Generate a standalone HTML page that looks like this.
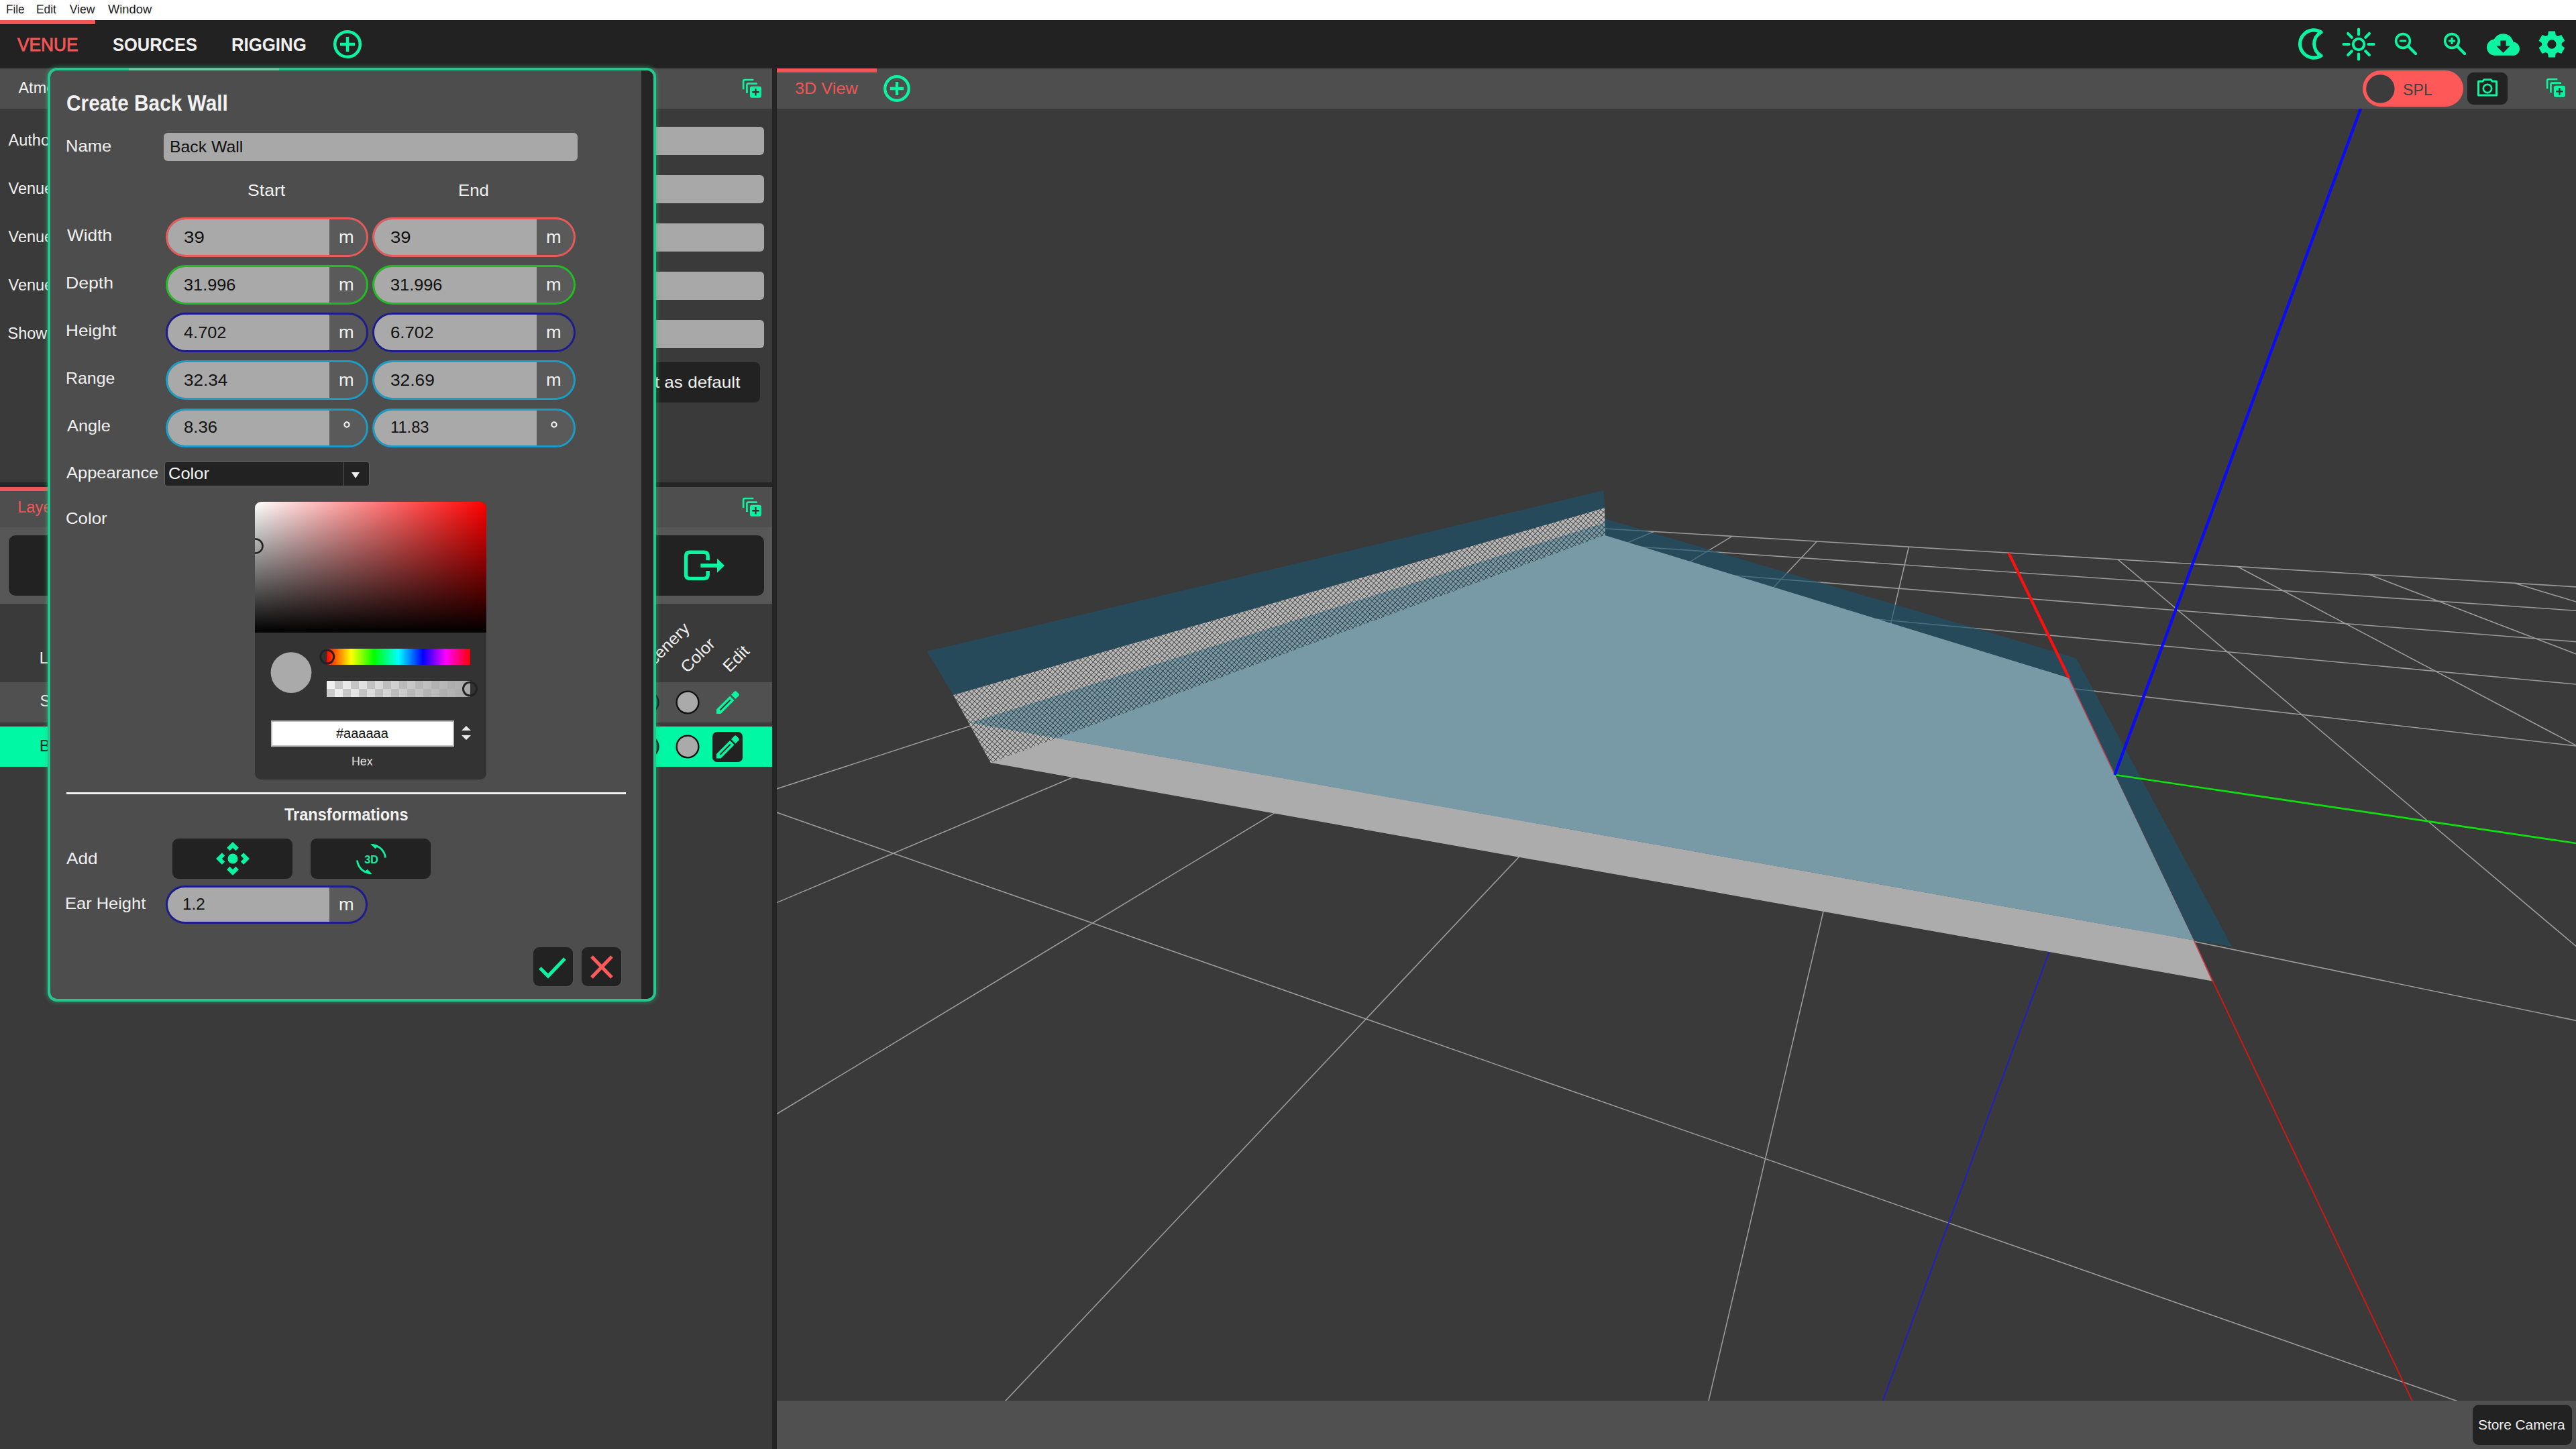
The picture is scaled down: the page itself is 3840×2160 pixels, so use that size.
<!DOCTYPE html><html><head><meta charset="utf-8"><style>
html,body{margin:0;padding:0;width:3840px;height:2160px;overflow:hidden;background:#3a3a3a;font-family:"Liberation Sans",sans-serif;}
.r{position:absolute;box-sizing:border-box;}
.t{position:absolute;white-space:nowrap;transform-origin:0 0;}
</style></head><body>
<div class="r" style="left:0px;top:0px;width:3840.00px;height:30.00px;background:#ffffff;"></div>
<div class="t" style="left:8.60px;top:5.89px;font-size:17.5px;line-height:17.5px;color:#1a1a1a;transform:scaleX(0.9735);">File</div>
<div class="t" style="left:53.98px;top:5.89px;font-size:17.5px;line-height:17.5px;color:#1a1a1a;transform:scaleX(0.9897);">Edit</div>
<div class="t" style="left:103.73px;top:5.89px;font-size:17.5px;line-height:17.5px;color:#1a1a1a;">View</div>
<div class="t" style="left:160.83px;top:5.89px;font-size:17.5px;line-height:17.5px;color:#1a1a1a;transform:scaleX(1.0464);">Window</div>
<div class="r" style="left:0px;top:30px;width:3840.00px;height:72.00px;background:#222222;"></div>
<div class="r" style="left:0px;top:30px;width:142.00px;height:6.00px;background:#f25555;"></div>
<div class="t" style="left:25.70px;top:52.47px;font-size:28.5px;line-height:28.5px;color:#f25555;transform:scaleX(0.9208);-webkit-text-stroke:0.9px #f25555;">VENUE</div>
<div class="t" style="left:167.79px;top:52.47px;font-size:28.5px;line-height:28.5px;color:#f0f0f0;font-weight:700;transform:scaleX(0.8941);">SOURCES</div>
<div class="t" style="left:345.10px;top:52.47px;font-size:28.5px;line-height:28.5px;color:#f0f0f0;font-weight:700;transform:scaleX(0.9043);">RIGGING</div>
<svg class="r" style="left:490px;top:38px;" width="56" height="56"><circle cx="28" cy="28" r="18.8" fill="none" stroke="#0cf4a2" stroke-width="4.5"/><path d="M17 28H39M28 17V39" stroke="#0cf4a2" stroke-width="4.5"/></svg>
<svg class="r" style="left:3420px;top:38px;" width="50" height="56"><path d="M40 10 A20.6 20.6 0 1 0 40 45 A20 20 0 0 1 40 10 Z" fill="none" stroke="#0cf4a2" stroke-width="5.2" stroke-linejoin="round"/></svg>
<svg class="r" style="left:3488px;top:38px;" width="56" height="56"><circle cx="28" cy="28" r="8.2" fill="none" stroke="#0cf4a2" stroke-width="4"/><line x1="28.00" y1="13.50" x2="28.00" y2="5.50" stroke="#0cf4a2" stroke-width="4.2" stroke-linecap="round"/><line x1="38.25" y1="17.75" x2="43.91" y2="12.09" stroke="#0cf4a2" stroke-width="4.2" stroke-linecap="round"/><line x1="42.50" y1="28.00" x2="50.50" y2="28.00" stroke="#0cf4a2" stroke-width="4.2" stroke-linecap="round"/><line x1="38.25" y1="38.25" x2="43.91" y2="43.91" stroke="#0cf4a2" stroke-width="4.2" stroke-linecap="round"/><line x1="28.00" y1="42.50" x2="28.00" y2="50.50" stroke="#0cf4a2" stroke-width="4.2" stroke-linecap="round"/><line x1="17.75" y1="38.25" x2="12.09" y2="43.91" stroke="#0cf4a2" stroke-width="4.2" stroke-linecap="round"/><line x1="13.50" y1="28.00" x2="5.50" y2="28.00" stroke="#0cf4a2" stroke-width="4.2" stroke-linecap="round"/><line x1="17.75" y1="17.75" x2="12.09" y2="12.09" stroke="#0cf4a2" stroke-width="4.2" stroke-linecap="round"/></svg>
<svg class="r" style="left:3561.7px;top:40.6px;" width="48" height="48"><circle cx="20" cy="20" r="10.4" fill="none" stroke="#0cf4a2" stroke-width="3.6"/><line x1="28.5" y1="28.5" x2="39" y2="39" stroke="#0cf4a2" stroke-width="4.4" stroke-linecap="round"/><line x1="15" y1="20" x2="25" y2="20" stroke="#0cf4a2" stroke-width="3"/></svg>
<svg class="r" style="left:3635px;top:40.6px;" width="48" height="48"><circle cx="20" cy="20" r="10.4" fill="none" stroke="#0cf4a2" stroke-width="3.6"/><line x1="28.5" y1="28.5" x2="39" y2="39" stroke="#0cf4a2" stroke-width="4.4" stroke-linecap="round"/><line x1="15" y1="20" x2="25" y2="20" stroke="#0cf4a2" stroke-width="3"/><line x1="20" y1="15" x2="20" y2="25" stroke="#0cf4a2" stroke-width="3"/></svg>
<svg class="r" style="left:3707px;top:42px;" width="49" height="49" viewBox="0 0 24 24"><path fill="#0cf4a2" d="M19.35 10.04C18.67 6.59 15.64 4 12 4 9.11 4 6.6 5.64 5.35 8.04 2.34 8.36 0 10.91 0 14c0 3.31 2.69 6 6 6h13c2.76 0 5-2.24 5-5 0-2.64-2.05-4.78-4.65-4.96zM17 13l-5 5-5-5h3V9h4v4h3z"/></svg>
<svg class="r" style="left:3780px;top:42px;" width="48" height="48"><path fill="#0cf4a2" fill-rule="evenodd" d="M18.10 10.28 L18.85 4.54 L28.95 4.54 L29.70 10.28 L32.88 12.11 L38.22 9.90 L43.27 18.65 L38.69 22.16 L38.69 25.84 L43.27 29.35 L38.22 38.10 L32.88 35.89 L29.70 37.72 L28.95 43.46 L18.85 43.46 L18.10 37.72 L14.92 35.89 L9.58 38.10 L4.53 29.35 L9.11 25.84 L9.11 22.16 L4.53 18.65 L9.58 9.90 L14.92 12.11 Z M30.599999999999998 24 A6.7 6.7 0 1 0 17.2 24 A6.7 6.7 0 1 0 30.599999999999998 24 Z"/></svg>
<div class="r" style="left:0px;top:102px;width:1151.00px;height:2058.00px;background:#3a3a3a;"></div>
<div class="r" style="left:0px;top:102px;width:1151.00px;height:60.00px;background:#4e4e4e;"></div>
<div class="t" style="left:27.45px;top:119.91px;font-size:23.5px;line-height:23.5px;color:#f0f0f0;">Atmosphere</div>
<svg class="r" style="left:1106px;top:117px;" width="32" height="32"><path d="M2.1 16.3V4.2Q2.1 2 4.3 2H17.3" fill="none" stroke="#0cf4a2" stroke-width="2.7"/><path d="M7.4 22V9.8Q7.4 7.6 9.6 7.6H22.8" fill="none" stroke="#0cf4a2" stroke-width="2.7"/><rect x="11.9" y="11.7" width="17" height="17.1" rx="3" fill="#0cf4a2"/><path d="M15.2 20.2H25.7M20.4 15V25.4" stroke="#333" stroke-width="2.4"/></svg>
<div class="t" style="left:12.55px;top:198.11px;font-size:23.5px;line-height:23.5px;color:#f0f0f0;">Author</div>
<div class="r" style="left:300px;top:189px;width:839.00px;height:42.00px;background:#a8a8a8;border-radius:6px;"></div>
<div class="t" style="left:12.51px;top:270.11px;font-size:23.5px;line-height:23.5px;color:#f0f0f0;">Venue name</div>
<div class="r" style="left:300px;top:261px;width:839.00px;height:42.00px;background:#a8a8a8;border-radius:6px;"></div>
<div class="t" style="left:12.51px;top:342.11px;font-size:23.5px;line-height:23.5px;color:#f0f0f0;">Venue location</div>
<div class="r" style="left:300px;top:333px;width:839.00px;height:42.00px;background:#a8a8a8;border-radius:6px;"></div>
<div class="t" style="left:12.51px;top:414.11px;font-size:23.5px;line-height:23.5px;color:#f0f0f0;">Venue type</div>
<div class="r" style="left:300px;top:405px;width:839.00px;height:42.00px;background:#a8a8a8;border-radius:6px;"></div>
<div class="t" style="left:11.54px;top:486.11px;font-size:23.5px;line-height:23.5px;color:#f0f0f0;">Show name</div>
<div class="r" style="left:300px;top:477px;width:839.00px;height:42.00px;background:#a8a8a8;border-radius:6px;"></div>
<div class="r" style="left:300px;top:540px;width:833.00px;height:60.00px;background:#222222;border-radius:8px;"></div>
<div class="t" style="left:944.30px;top:558.38px;font-size:24px;line-height:24px;color:#f0f0f0;transform:scaleX(1.0860);">Set as default</div>
<div class="r" style="left:0px;top:719px;width:1151.00px;height:7.00px;background:#252525;"></div>
<div class="r" style="left:0px;top:726px;width:1151.00px;height:60.00px;background:#4e4e4e;"></div>
<div class="r" style="left:0px;top:726px;width:150.00px;height:6.00px;background:#f25555;"></div>
<div class="t" style="left:26.27px;top:744.71px;font-size:23.5px;line-height:23.5px;color:#f25555;">Layers</div>
<svg class="r" style="left:1106px;top:740.5px;" width="32" height="32"><path d="M2.1 16.3V4.2Q2.1 2 4.3 2H17.3" fill="none" stroke="#0cf4a2" stroke-width="2.7"/><path d="M7.4 22V9.8Q7.4 7.6 9.6 7.6H22.8" fill="none" stroke="#0cf4a2" stroke-width="2.7"/><rect x="11.9" y="11.7" width="17" height="17.1" rx="3" fill="#0cf4a2"/><path d="M15.2 20.2H25.7M20.4 15V25.4" stroke="#333" stroke-width="2.4"/></svg>
<div class="r" style="left:0px;top:786px;width:1151.00px;height:114.00px;background:#575757;"></div>
<div class="r" style="left:12.5px;top:798px;width:1126.50px;height:90.00px;background:#222222;border-radius:10px;"></div>
<svg class="r" style="left:1016px;top:815px;" width="70" height="56"><path d="M39.2 20.2V14Q39.2 8.3 33.5 8.3H12.2Q6.5 8.3 6.5 14V41.7Q6.5 47.4 12.2 47.4H33.5Q39.2 47.4 39.2 41.7V36" fill="none" stroke="#0cf4a2" stroke-width="5.4"/><path d="M28.4 28.1H54" stroke="#0cf4a2" stroke-width="5.8"/><path d="M53 17.4L64 28.1L53 38.8Z" fill="#0cf4a2"/></svg>
<div class="t" style="left:58.87px;top:970.11px;font-size:23.5px;line-height:23.5px;color:#f0f0f0;">Layer</div>
<div class="t" style="left:903px;top:984.26px;font-size:24.5px;line-height:24.5px;color:#f0f0f0;transform-origin:0 20.74px;transform:rotate(-45deg) scaleX(1.04);">Visible</div>
<div class="t" style="left:963.5px;top:984.26px;font-size:24.5px;line-height:24.5px;color:#f0f0f0;transform-origin:0 20.74px;transform:rotate(-45deg) scaleX(1.04);">Scenery</div>
<div class="t" style="left:1024.5px;top:984.26px;font-size:24.5px;line-height:24.5px;color:#f0f0f0;transform-origin:0 20.74px;transform:rotate(-45deg) scaleX(1.04);">Color</div>
<div class="t" style="left:1087.8px;top:983.26px;font-size:24.5px;line-height:24.5px;color:#f0f0f0;transform-origin:0 20.74px;transform:rotate(-45deg) scaleX(1.04);">Edit</div>
<div class="r" style="left:0px;top:1016.6px;width:1151.00px;height:60.10px;background:#505050;"></div>
<div class="t" style="left:59.44px;top:1033.91px;font-size:23.5px;line-height:23.5px;color:#f0f0f0;">Stage</div>
<div class="r" style="left:0px;top:1083px;width:1151.00px;height:60.00px;background:#00f7a4;"></div>
<div class="t" style="left:59.07px;top:1100.71px;font-size:23.5px;line-height:23.5px;color:#1b1b1b;">Back Wall</div>
<svg class="r" style="left:1006px;top:1027.7px;" width="38" height="38"><circle cx="19" cy="19" r="16.4" fill="#aaaaaa" stroke="#111" stroke-width="2.4"/></svg>
<svg class="r" style="left:1006px;top:1093.6px;" width="38" height="38"><circle cx="19" cy="19" r="16.4" fill="#aaaaaa" stroke="#111" stroke-width="2.4"/></svg>
<svg class="r" style="left:946px;top:1028px;" width="38" height="38"><circle cx="19" cy="19" r="16.4" fill="#2a6a55" stroke="#111" stroke-width="2.4"/></svg>
<svg class="r" style="left:946px;top:1094px;" width="38" height="38"><circle cx="19" cy="19" r="16.4" fill="#2a6a55" stroke="#111" stroke-width="2.4"/></svg>
<div class="r" style="left:1062.4px;top:1091.2px;width:44.40px;height:44.40px;background:#222222;border-radius:7px;"></div>
<svg class="r" style="left:1046px;top:1024px;" width="70" height="50"><g transform="translate(22 40) rotate(-45)"><path d="M0 0L4.6 -4.6H33V4.6H4.6Z" fill="#0cf4a2"/><path d="M7.5 0H29.5" stroke="#262626" stroke-width="1.9"/><path d="M35.6 -4.6H42.5Q44.6 -4.6 44.6 -2.5V2.5Q44.6 4.6 42.5 4.6H35.6Z" fill="#0cf4a2"/></g></svg>
<div style="position:absolute;left:0;top:66px">
<svg class="r" style="left:1046px;top:1024px;" width="70" height="50"><g transform="translate(22 40.40000000000009) rotate(-45)"><path d="M0 0L4.6 -4.6H33V4.6H4.6Z" fill="#0cf4a2"/><path d="M7.5 0H29.5" stroke="#262626" stroke-width="1.9"/><path d="M35.6 -4.6H42.5Q44.6 -4.6 44.6 -2.5V2.5Q44.6 4.6 42.5 4.6H35.6Z" fill="#0cf4a2"/></g></svg>
</div>
<div class="r" style="left:1151px;top:102px;width:7.00px;height:2058.00px;background:#242424;"></div>
<div class="r" style="left:1158px;top:102px;width:2682.00px;height:60.00px;background:#4e4e4e;"></div>
<div class="r" style="left:1158px;top:102px;width:149.00px;height:6.00px;background:#f25555;"></div>
<div class="t" style="left:1185.04px;top:120.08px;font-size:24px;line-height:24px;color:#f25555;transform:scaleX(1.0536);">3D View</div>
<svg class="r" style="left:1310px;top:105px;" width="54" height="54"><circle cx="27" cy="27" r="17.8" fill="none" stroke="#0cf4a2" stroke-width="4.3"/><path d="M17 27H37M27 17V37" stroke="#0cf4a2" stroke-width="4.3"/></svg>
<div class="r" style="left:3522px;top:105px;width:149.50px;height:54.00px;background:#ff5858;border-radius:27px;"></div>
<svg class="r" style="left:3527px;top:110.5px;" width="44" height="44"><circle cx="21.4" cy="21.4" r="21.2" fill="#3c3c3c"/></svg>
<div class="t" style="left:3581.96px;top:122.18px;font-size:24px;line-height:24px;color:#404040;transform:scaleX(0.9658);">SPL</div>
<div class="r" style="left:3678px;top:108px;width:60.00px;height:47.60px;background:#222222;border-radius:9px;"></div>
<svg class="r" style="left:3690px;top:114px;" width="36" height="34"><path d="M4.5 7.3H10.8L12.8 4.7H23.2L25.2 7.3H31.5V28.1H4.5Z" fill="none" stroke="#0cf4a2" stroke-width="3" stroke-linejoin="round"/><circle cx="18" cy="18" r="6.2" fill="none" stroke="#0cf4a2" stroke-width="2.7"/></svg>
<svg class="r" style="left:3795px;top:116px;" width="32" height="32"><path d="M2.1 16.3V4.2Q2.1 2 4.3 2H17.3" fill="none" stroke="#0cf4a2" stroke-width="2.7"/><path d="M7.4 22V9.8Q7.4 7.6 9.6 7.6H22.8" fill="none" stroke="#0cf4a2" stroke-width="2.7"/><rect x="11.9" y="11.7" width="17" height="17.1" rx="3" fill="#0cf4a2"/><path d="M15.2 20.2H25.7M20.4 15V25.4" stroke="#333" stroke-width="2.4"/></svg>
<div class="r" style="left:1158px;top:162px;width:2682.00px;height:1926.00px;background:#3a3a3a;"></div>
<div class="r" style="left:1158px;top:2088px;width:2682.00px;height:72.00px;background:#505050;"></div>
<div class="r" style="left:3686px;top:2094.3px;width:148.00px;height:59.30px;background:#222222;border-radius:9px;"></div>
<div class="t" style="left:3694.36px;top:2113.02px;font-size:21px;line-height:21px;color:#f0f0f0;transform:scaleX(0.9915);">Store Camera</div>
<svg class="r" style="left:1158px;top:162px" width="2682" height="1926"><line x1="1198.6" y1="623.9" x2="-19192.0" y2="7259.1" stroke="#9a9a9a" stroke-width="1.6"/><line x1="1307.2" y1="630.4" x2="-14359.4" y2="7259.2" stroke="#9a9a9a" stroke-width="1.6"/><line x1="1424.1" y1="637.4" x2="-9526.7" y2="7259.3" stroke="#9a9a9a" stroke-width="1.6"/><line x1="1550.4" y1="645.0" x2="-4694.0" y2="7259.4" stroke="#9a9a9a" stroke-width="1.6"/><line x1="1687.4" y1="653.2" x2="138.7" y2="7259.5" stroke="#9a9a9a" stroke-width="1.6"/><line x1="1998.9" y1="671.9" x2="9804.1" y2="7259.8" stroke="#9a9a9a" stroke-width="1.6"/><line x1="2177.1" y1="682.5" x2="14636.7" y2="7259.9" stroke="#9a9a9a" stroke-width="1.6"/><line x1="2373.2" y1="694.3" x2="19469.4" y2="7260.0" stroke="#9a9a9a" stroke-width="1.6"/><line x1="2590.2" y1="707.3" x2="24302.1" y2="7260.1" stroke="#9a9a9a" stroke-width="1.6"/><line x1="2831.5" y1="721.8" x2="29134.8" y2="7260.2" stroke="#9a9a9a" stroke-width="1.6"/><line x1="-2329711.1" y1="759114.5" x2="-22609.3" y2="7259.0" stroke="#9a9a9a" stroke-width="1.6"/><line x1="-3618.9" y1="2191.5" x2="-9162.2" y2="7259.3" stroke="#9a9a9a" stroke-width="1.6"/><line x1="-944.9" y1="1321.4" x2="4284.9" y2="7259.6" stroke="#9a9a9a" stroke-width="1.6"/><line x1="-52.3" y1="1030.9" x2="17732.0" y2="7260.0" stroke="#9a9a9a" stroke-width="1.6"/><line x1="394.3" y1="885.6" x2="18936.8" y2="4725.2" stroke="#9a9a9a" stroke-width="1.6"/><line x1="841.1" y1="740.2" x2="4652.4" y2="1174.4" stroke="#9a9a9a" stroke-width="1.6"/><line x1="968.8" y1="698.7" x2="3796.5" y2="961.7" stroke="#9a9a9a" stroke-width="1.6"/><line x1="1064.6" y1="667.5" x2="3328.9" y2="845.5" stroke="#9a9a9a" stroke-width="1.6"/><line x1="1139.0" y1="643.2" x2="3034.3" y2="772.2" stroke="#9a9a9a" stroke-width="1.6"/><line x1="1198.6" y1="623.9" x2="2831.5" y2="721.8" stroke="#9a9a9a" stroke-width="1.6"/><line x1="1994.5" y1="993.0" x2="2472.0" y2="1998.0" stroke="#d01818" stroke-width="2"/><line x1="1994.5" y1="993.0" x2="1622.0" y2="1998.0" stroke="#2020c8" stroke-width="2"/><polygon points="288.0,915.0 2112.0,1239.5 2140.0,1300.5 319.0,975.0" fill="#acacac" /><polygon points="263.0,874.0 1234.0,595.0 1235.0,635.5 319.0,975.0" fill="#b8b8b8" /><polygon points="288.0,915.5 1234.5,617.0 1235.0,636.0 1926.0,848.4 2112.4,1239.7" fill="#7899a6" /><defs><pattern id="mesh" width="5.4" height="5.4" patternUnits="userSpaceOnUse" patternTransform="rotate(42)"><path d="M0 0H5.4M0 0V5.4" stroke="#000" stroke-width="1.3" fill="none"/></pattern><clipPath id="mclip"><polygon points="263.0,874.0 1234.0,595.0 1235.0,635.5 319.0,975.0"/></clipPath></defs><polygon points="263.0,874.0 1234.0,595.0 1235.0,635.5 319.0,975.0" fill="url(#mesh)" opacity="0.8"/><polygon points="224.0,809.0 1232.6,569.0 1234.4,595.1 263.0,874.0" fill="#1c5470" fill-opacity="0.62"/><polygon points="1234.4,611.3 1936.9,819.1 2169.1,1248.9 2112.4,1239.7 1925.9,848.4 1235.0,636.0" fill="#1c5470" fill-opacity="0.62"/><line x1="1836.4" y1="662.4" x2="1926.0" y2="848.4" stroke="#ff1010" stroke-width="4.2"/><line x1="1926.0" y1="848.4" x2="1994.5" y2="993.0" stroke="#c04050" stroke-width="1.6"/><line x1="2112.4" y1="1239.7" x2="2140.0" y2="1300.5" stroke="#c04050" stroke-width="1.6"/><line x1="1994.5" y1="993.0" x2="2682.0" y2="1095.0" stroke="#10e010" stroke-width="2.6"/><line x1="1994.5" y1="993.0" x2="2361.0" y2="0.0" stroke="#0a0aff" stroke-width="4.2"/></svg>
<div class="r" style="left:70.5px;top:101px;width:907.5px;height:1391.7px;border:4.6px solid #27c68f;border-radius:14px;background:#4d4d4d;box-shadow:0 0 6px 1px rgba(40,200,140,0.5);overflow:hidden;"><div class="r" style="left:881.9px;top:0;width:18px;height:100%;background:#252525;"></div></div>
<div class="r" style="left:191.7px;top:102px;width:224.20px;height:3.00px;background:#6ccaa2;"></div>
<div class="t" style="left:98.68px;top:136.97px;font-size:33px;line-height:33px;color:#f2f2f2;font-weight:700;transform:scaleX(0.9033);">Create Back Wall</div>
<div class="t" style="left:98.21px;top:206.48px;font-size:24px;line-height:24px;color:#f0f0f0;transform:scaleX(1.0642);">Name</div>
<div class="r" style="left:244px;top:198.3px;width:617.00px;height:41.50px;background:#a8a8a8;border-radius:6px;"></div>
<div class="t" style="left:252.57px;top:207.38px;font-size:24px;line-height:24px;color:#111111;transform:scaleX(1.0329);">Back Wall</div>
<div class="t" style="left:369.40px;top:272.18px;font-size:24px;line-height:24px;color:#f0f0f0;transform:scaleX(1.1084);">Start</div>
<div class="t" style="left:682.89px;top:271.98px;font-size:24px;line-height:24px;color:#f0f0f0;transform:scaleX(1.0716);">End</div>
<div class="t" style="left:99.70px;top:338.78px;font-size:24px;line-height:24px;color:#f0f0f0;transform:scaleX(1.0919);">Width</div>
<div class="r" style="left:247px;top:324.3px;width:302.00px;height:58.50px;border:3.6px solid #e85a5a;border-radius:30px;overflow:hidden;background:#5a5a5a;"><div class="r" style="left:0;top:0;width:241.10px;height:100%;background:#a9a9a9;"></div></div>
<div class="t" style="left:273.65px;top:341.78px;font-size:24px;line-height:24px;color:#111111;transform:scaleX(1.1522);">39</div>
<div class="t" style="left:504.90px;top:340.94px;font-size:25px;line-height:25px;color:#f0f0f0;transform:scaleX(1.0883);">m</div>
<div class="r" style="left:555px;top:324.3px;width:303.00px;height:58.50px;border:3.6px solid #e85a5a;border-radius:30px;overflow:hidden;background:#5a5a5a;"><div class="r" style="left:0;top:0;width:242.20px;height:100%;background:#a9a9a9;"></div></div>
<div class="t" style="left:582.26px;top:341.78px;font-size:24px;line-height:24px;color:#111111;transform:scaleX(1.1401);">39</div>
<div class="t" style="left:814.00px;top:340.94px;font-size:25px;line-height:25px;color:#f0f0f0;transform:scaleX(1.0883);">m</div>
<div class="t" style="left:97.62px;top:409.68px;font-size:24px;line-height:24px;color:#f0f0f0;transform:scaleX(1.1086);">Depth</div>
<div class="r" style="left:247px;top:395.35px;width:302.00px;height:58.50px;border:3.6px solid #22bb22;border-radius:30px;overflow:hidden;background:#5a5a5a;"><div class="r" style="left:0;top:0;width:241.10px;height:100%;background:#a9a9a9;"></div></div>
<div class="t" style="left:273.74px;top:412.68px;font-size:24px;line-height:24px;color:#111111;transform:scaleX(1.0539);">31.996</div>
<div class="t" style="left:504.90px;top:411.84px;font-size:25px;line-height:25px;color:#f0f0f0;transform:scaleX(1.0883);">m</div>
<div class="r" style="left:555px;top:395.35px;width:303.00px;height:58.50px;border:3.6px solid #22bb22;border-radius:30px;overflow:hidden;background:#5a5a5a;"><div class="r" style="left:0;top:0;width:242.20px;height:100%;background:#a9a9a9;"></div></div>
<div class="t" style="left:582.34px;top:412.68px;font-size:24px;line-height:24px;color:#111111;transform:scaleX(1.0539);">31.996</div>
<div class="t" style="left:814.00px;top:411.84px;font-size:25px;line-height:25px;color:#f0f0f0;transform:scaleX(1.0883);">m</div>
<div class="t" style="left:97.65px;top:480.88px;font-size:24px;line-height:24px;color:#f0f0f0;transform:scaleX(1.0900);">Height</div>
<div class="r" style="left:247px;top:466.4px;width:302.00px;height:58.50px;border:3.6px solid #1c1c8c;border-radius:30px;overflow:hidden;background:#5a5a5a;"><div class="r" style="left:0;top:0;width:241.10px;height:100%;background:#a9a9a9;"></div></div>
<div class="t" style="left:274.14px;top:483.88px;font-size:24px;line-height:24px;color:#111111;transform:scaleX(1.0562);">4.702</div>
<div class="t" style="left:504.90px;top:483.04px;font-size:25px;line-height:25px;color:#f0f0f0;transform:scaleX(1.0883);">m</div>
<div class="r" style="left:555px;top:466.4px;width:303.00px;height:58.50px;border:3.6px solid #1c1c8c;border-radius:30px;overflow:hidden;background:#5a5a5a;"><div class="r" style="left:0;top:0;width:242.20px;height:100%;background:#a9a9a9;"></div></div>
<div class="t" style="left:582.01px;top:483.88px;font-size:24px;line-height:24px;color:#111111;transform:scaleX(1.0738);">6.702</div>
<div class="t" style="left:814.00px;top:483.04px;font-size:25px;line-height:25px;color:#f0f0f0;transform:scaleX(1.0883);">m</div>
<div class="t" style="left:97.76px;top:551.78px;font-size:24px;line-height:24px;color:#f0f0f0;transform:scaleX(1.0369);">Range</div>
<div class="r" style="left:247px;top:537.45px;width:302.00px;height:58.50px;border:3.6px solid #1a9cc4;border-radius:30px;overflow:hidden;background:#5a5a5a;"><div class="r" style="left:0;top:0;width:241.10px;height:100%;background:#a9a9a9;"></div></div>
<div class="t" style="left:273.71px;top:554.88px;font-size:24px;line-height:24px;color:#111111;transform:scaleX(1.0866);">32.34</div>
<div class="t" style="left:504.90px;top:554.04px;font-size:25px;line-height:25px;color:#f0f0f0;transform:scaleX(1.0883);">m</div>
<div class="r" style="left:555px;top:537.45px;width:303.00px;height:58.50px;border:3.6px solid #1a9cc4;border-radius:30px;overflow:hidden;background:#5a5a5a;"><div class="r" style="left:0;top:0;width:242.20px;height:100%;background:#a9a9a9;"></div></div>
<div class="t" style="left:582.30px;top:554.88px;font-size:24px;line-height:24px;color:#111111;transform:scaleX(1.0947);">32.69</div>
<div class="t" style="left:814.00px;top:554.04px;font-size:25px;line-height:25px;color:#f0f0f0;transform:scaleX(1.0883);">m</div>
<div class="t" style="left:99.75px;top:622.68px;font-size:24px;line-height:24px;color:#f0f0f0;transform:scaleX(1.0554);">Angle</div>
<div class="r" style="left:247px;top:608.5px;width:302.00px;height:58.50px;border:3.6px solid #1a9cc4;border-radius:30px;overflow:hidden;background:#5a5a5a;"><div class="r" style="left:0;top:0;width:241.10px;height:100%;background:#a9a9a9;"></div></div>
<div class="t" style="left:273.59px;top:625.28px;font-size:24px;line-height:24px;color:#111111;transform:scaleX(1.0708);">8.36</div>
<svg class="r" style="left:510.7px;top:626.5px;" width="12" height="12"><circle cx="6" cy="6" r="3.6" fill="none" stroke="#f0f0f0" stroke-width="2.2"/></svg>
<div class="r" style="left:555px;top:608.5px;width:303.00px;height:58.50px;border:3.6px solid #1a9cc4;border-radius:30px;overflow:hidden;background:#5a5a5a;"><div class="r" style="left:0;top:0;width:242.20px;height:100%;background:#a9a9a9;"></div></div>
<div class="t" style="left:581.50px;top:625.28px;font-size:24px;line-height:24px;color:#111111;transform:scaleX(0.9871);">11.83</div>
<svg class="r" style="left:819.8px;top:626.5px;" width="12" height="12"><circle cx="6" cy="6" r="3.6" fill="none" stroke="#f0f0f0" stroke-width="2.2"/></svg>
<div class="t" style="left:99.45px;top:693.48px;font-size:24px;line-height:24px;color:#f0f0f0;transform:scaleX(1.0606);">Appearance</div>
<div class="r" style="left:244.8px;top:688px;width:306.10px;height:37.30px;background:#222222;border:1.2px solid #5e5e5e;border-radius:4px;"></div>
<div class="r" style="left:510.8px;top:689px;width:1.20px;height:35.00px;background:#5e5e5e;"></div>
<div class="t" style="left:250.73px;top:694.18px;font-size:24px;line-height:24px;color:#f4f4f4;transform:scaleX(1.0614);">Color</div>
<svg class="r" style="left:522px;top:701px;" width="16" height="14"><path d="M2 3H14L8 12Z" fill="#f0f0f0"/></svg>
<div class="t" style="left:98.21px;top:760.68px;font-size:24px;line-height:24px;color:#f0f0f0;transform:scaleX(1.0739);">Color</div>
<div class="r" style="left:380px;top:748px;width:345px;height:414px;background:#333333;border-radius:9px;overflow:hidden;"><div class="r" style="left:0;top:0;width:345px;height:195px;background:linear-gradient(to right,#ffffff,#ff0000);"></div><div class="r" style="left:0;top:0;width:345px;height:195px;background:linear-gradient(to bottom,rgba(0,0,0,0),#000000);"></div><svg class="r" style="left:-12px;top:53px" width="26" height="26"><circle cx="13" cy="13" r="10.5" fill="none" stroke="#222" stroke-width="2.6"/></svg></div>
<div class="r" style="left:487px;top:967px;width:214.00px;height:24.00px;background:linear-gradient(to right,#ff0000 0%,#ffff00 17%,#00ff00 33%,#00ffff 50%,#0000ff 67%,#ff00ff 83%,#ff0000 100%);"></div>
<div class="r" style="left:487px;top:1014.5px;width:214px;height:24px;background-color:#f2f2f2;background-image:linear-gradient(45deg,#cccccc 25%,transparent 25%,transparent 75%,#cccccc 75%),linear-gradient(45deg,#cccccc 25%,transparent 25%,transparent 75%,#cccccc 75%);background-size:24px 24px;background-position:0 0,12px 12px;"><div class="r" style="left:0;top:0;width:100%;height:100%;background:linear-gradient(to right,rgba(170,170,170,0),#aaaaaa);"></div></div>
<svg class="r" style="left:474px;top:966px;" width="28" height="28"><circle cx="13.7" cy="13" r="10" fill="none" stroke="#222" stroke-width="3"/></svg>
<svg class="r" style="left:687px;top:1013.5px;" width="28" height="28"><circle cx="13.5" cy="13" r="10" fill="none" stroke="#222" stroke-width="3"/></svg>
<svg class="r" style="left:403px;top:972px;" width="62" height="62"><circle cx="31" cy="30.6" r="30.4" fill="#aaaaaa"/></svg>
<div class="r" style="left:403.7px;top:1074.4px;width:273.50px;height:38.40px;background:#ffffff;border:2px solid #bdbdbd;"></div>
<div class="t" style="left:500.92px;top:1083.37px;font-size:20px;line-height:20px;color:#111111;">#aaaaaa</div>
<svg class="r" style="left:686px;top:1078px;" width="18" height="30"><path d="M2 11H16L9 4Z M2 18H16L9 25Z" fill="#e8e8e8"/></svg>
<div class="t" style="left:523.54px;top:1125.42px;font-size:19px;line-height:19px;color:#e0e0e0;transform:scaleX(0.9365);">Hex</div>
<div class="r" style="left:99px;top:1181.2px;width:834.00px;height:3.20px;background:#f0f0f0;"></div>
<div class="t" style="left:424.34px;top:1201.84px;font-size:25px;line-height:25px;color:#f0f0f0;font-weight:700;transform:scaleX(0.9424);">Transformations</div>
<div class="t" style="left:98.95px;top:1267.68px;font-size:24px;line-height:24px;color:#f0f0f0;transform:scaleX(1.0897);">Add</div>
<div class="r" style="left:256.8px;top:1250.3px;width:179.00px;height:59.50px;background:#222222;border-radius:9px;"></div>
<div class="r" style="left:463.3px;top:1250.3px;width:178.70px;height:59.50px;background:#222222;border-radius:9px;"></div>
<svg class="r" style="left:317px;top:1250px;" width="60" height="60" viewBox="0 0 24 24"><path fill="#0cf4a2" d="M15.54 5.54L13.77 7.3 12 5.54 10.23 7.3 8.46 5.54 12 2zm2.92 10l-1.76-1.77L18.46 12l-1.76-1.77 1.76-1.77L22 12zm-10 2.92l1.77-1.76L12 18.46l1.77-1.76 1.77 1.76L12 22zm-2.92-10l1.76 1.77L5.54 12l1.76 1.77-1.76 1.77L2 12z"/><circle cx="12" cy="12" r="3" fill="#0cf4a2"/></svg>
<svg class="r" style="left:530.5px;top:1258px;" width="45" height="45" viewBox="0 0 24 24"><path fill="#0cf4a2" d="M7.52 21.48C4.25 19.94 1.91 16.76 1.55 13H.05C.56 19.16 5.71 24 12 24l.66-.03-3.81-3.81-1.330 1.32zM12 0l-.66.03 3.81 3.81 1.33-1.33c3.27 1.55 5.61 4.72 5.96 8.48h1.5C23.44 4.84 18.29 0 12 0z"/><text x="12" y="15.6" text-anchor="middle" font-family="Liberation Sans" font-weight="700" font-size="8.6" fill="#0cf4a2">3D</text></svg>
<div class="t" style="left:96.91px;top:1334.68px;font-size:24px;line-height:24px;color:#f0f0f0;transform:scaleX(1.0605);">Ear Height</div>
<div class="r" style="left:247px;top:1319.6px;width:301.00px;height:57.70px;border:3.6px solid #1c1c8c;border-radius:30px;overflow:hidden;background:#5a5a5a;"><div class="r" style="left:0;top:0;width:241.40px;height:100%;background:#a9a9a9;"></div></div>
<div class="t" style="left:271.85px;top:1336.48px;font-size:24px;line-height:24px;color:#111111;transform:scaleX(1.0120);">1.2</div>
<div class="t" style="left:505.20px;top:1335.64px;font-size:25px;line-height:25px;color:#f0f0f0;transform:scaleX(1.0883);">m</div>
<div class="r" style="left:794.7px;top:1411.6px;width:59.50px;height:58.90px;background:#222222;border-radius:9px;"></div>
<svg class="r" style="left:794.7px;top:1411.6px;" width="60" height="59"><path d="M10 31L22 43L47 17" fill="none" stroke="#0cf4a2" stroke-width="5.2"/></svg>
<div class="r" style="left:866.9px;top:1411.6px;width:59.50px;height:58.90px;background:#222222;border-radius:9px;"></div>
<svg class="r" style="left:866.9px;top:1411.6px;" width="60" height="59"><path d="M15 14L45 45M45 14L15 45" fill="none" stroke="#ff5a5a" stroke-width="5.2"/></svg>
</body></html>
